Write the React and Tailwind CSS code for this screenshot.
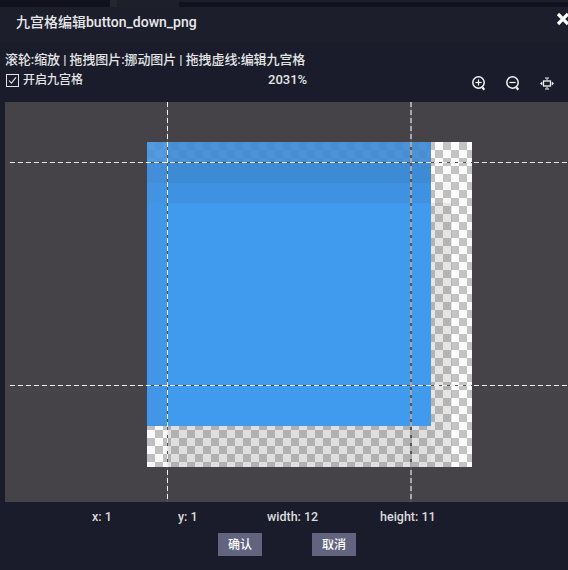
import React from "react";

const VEIL = "rgba(110,110,110,0.22)";
const VEIL_LIGHT = "rgba(110,110,110,0.18)";

function pixelColor(r, c) {
  if (c >= 14) {
    if (r >= 14) return c === 14 ? VEIL_LIGHT : "rgba(0,0,0,0)";
    if (c === 15) return "rgba(0,0,0,0)";
    if (r <= 1) return "rgba(0,0,0,0)";
    if (r === 2) return "rgba(110,110,110,0.06)";
    return VEIL_LIGHT;
  }
  if (r >= 14) {
    if (c === 0) return "rgba(0,0,0,0.02)";
    return VEIL;
  }
  if (r === 0) return c === 0 ? "rgba(70,146,219,0.93)" : "rgba(62,138,212,0.93)";
  if (r === 1) return c === 0 ? "rgb(66,142,216)" : "rgb(62,139,213)";
  if (r === 2) return c === 0 ? "rgb(66,147,226)" : "rgb(63,146,225)";
  if (c === 0) return "rgb(66,150,232)";
  return "rgb(64,155,238)";
}

const cells = [];
for (let r = 0; r < 16; r++) for (let c = 0; c < 16; c++) cells.push({ r, c, bg: pixelColor(r, c) });

function ZoomGlyph({ plus }) {
  return (
    <svg width="14" height="15" viewBox="0 0 14 15" fill="none" stroke="#f6f6f6" strokeWidth="1.5">
      <circle cx="6.5" cy="6.5" r="5.7" />
      <path d="M3.4 6.5h6.2" strokeWidth="1.2" />
      {plus && <path d="M6.5 3.4v6.2" strokeWidth="1.2" />}
      <path d="M10.4 11.4l1.9 2.4" strokeWidth="2.2" />
    </svg>
  );
}

function FitGlyph() {
  return (
    <svg width="14" height="13" viewBox="0 0 14 13" fill="none" stroke="#f6f6f6">
      <rect x="3.5" y="4" width="7" height="5" strokeWidth="1.3" />
      <path d="M5 1h4M5 12h4" strokeWidth="1.2" />
      <path d="M7 1.5v2M7 9.5v2" strokeWidth="1" />
      <path d="M0.3 6.5L2 5v3z" fill="#f6f6f6" strokeWidth="0.5" />
      <path d="M13.7 6.5L12 5v3z" fill="#f6f6f6" strokeWidth="0.5" />
    </svg>
  );
}

export default function App() {
  return (
    <div className="w-[568px] h-[570px] bg-[#1a1c2b] overflow-hidden flex flex-col text-[#e4e4e6] font-['Roboto','Noto_Sans_CJK_SC',sans-serif]">
      <div className="h-[7px] flex bg-[#1d1e2c]">
        <div className="w-[110px] bg-[#12121e]" />
        <div className="w-[7px] bg-[#26262e]" />
        <div className="w-[62px] bg-[#1e1f2b]" />
        <div className="flex-1 mt-[2px] bg-[#12121e]" />
      </div>
      <div className="h-[36px] bg-[#1c1e2c] flex items-center justify-between pl-[16px] pb-[7px]">
        <span className="text-[14px] leading-[20px] text-[#e8e8ea] font-medium">九宫格编辑button_down_png</span>
        <svg className="mb-[5px] -mr-[2px]" width="14" height="14" viewBox="0 0 14 14" stroke="#ffffff" strokeWidth="3.2">
          <path d="M2 2l10 10M12 2L2 12" />
        </svg>
      </div>
      <div className="pl-[5px] mt-[8px] text-[13px] leading-[18px] font-medium tracking-[-0.08px]">
        滚轮:缩放 | 拖拽图片:挪动图片 | 拖拽虚线:编辑九宫格
      </div>
      <div className="h-[24px] mt-[-1px] flex items-center pl-[6px]">
        <div className="w-[13px] h-[13px] border border-[#e4e4e6] flex items-center justify-center">
          <svg width="11" height="11" viewBox="0 0 11 11" fill="none" stroke="#e4e4e6" strokeWidth="1.1">
            <path d="M2 5.5l2.4 2.6L9 2.4" />
          </svg>
        </div>
        <span className="ml-[4px] text-[12px] font-medium">开启九宫格</span>
        <span className="ml-[185px] text-[13px] font-medium w-[40px]">2031%</span>
        <div className="ml-[164px] mt-[7px] flex items-center gap-[20px]">
          <ZoomGlyph plus />
          <ZoomGlyph />
          <FitGlyph />
        </div>
      </div>
      <div className="relative ml-[5px] mt-[10px] h-[400px] bg-[#454347] overflow-hidden">
        <div className="absolute left-[142px] top-[40px] w-[325px] h-[325px] bg-[repeating-conic-gradient(#c4c4c4_0_25%,#ffffff_0_50%)] bg-[length:16px_16px]">
          <div className="grid grid-cols-16 grid-rows-16 w-full h-full">
            {cells.map(({ r, c, bg }) => (
              <div key={`${r}-${c}`} style={{ backgroundColor: bg }} />
            ))}
          </div>
        </div>
        <div className="absolute left-[5px] right-0 top-[60px] h-px bg-[repeating-linear-gradient(90deg,#f2f2f2_0_5px,#4c5560_5px_8px)]" />
        <div className="absolute left-[5px] right-0 top-[283px] h-px bg-[repeating-linear-gradient(90deg,#f2f2f2_0_5px,#4c5560_5px_8px)]" />
        <div className="absolute left-[162px] top-0 bottom-0 w-px bg-[repeating-linear-gradient(180deg,#f2f2f2_0_5px,#4c5560_5px_8px)]" />
        <div className="absolute left-[405px] top-0 bottom-0 w-[2px] bg-[repeating-linear-gradient(180deg,#a8a8a8_0_5px,#4c5560_5px_8px)]" />
      </div>
      <div className="flex pl-[92px] mt-[6px] h-[17px] text-[12.5px] leading-[17px] text-[#dcdcde] font-medium">
        <span className="w-[86px]">x: 1</span>
        <span className="w-[89px]">y: 1</span>
        <span className="w-[113px]">width: 12</span>
        <span>height: 11</span>
      </div>
      <div className="flex pl-[218px] mt-[8px] gap-[50px]">
        <button className="w-[44px] h-[23px] bg-[#62647f] text-[12px] text-white font-medium">确认</button>
        <button className="w-[44px] h-[23px] bg-[#62647f] text-[12px] text-white font-medium">取消</button>
      </div>
    </div>
  );
}
